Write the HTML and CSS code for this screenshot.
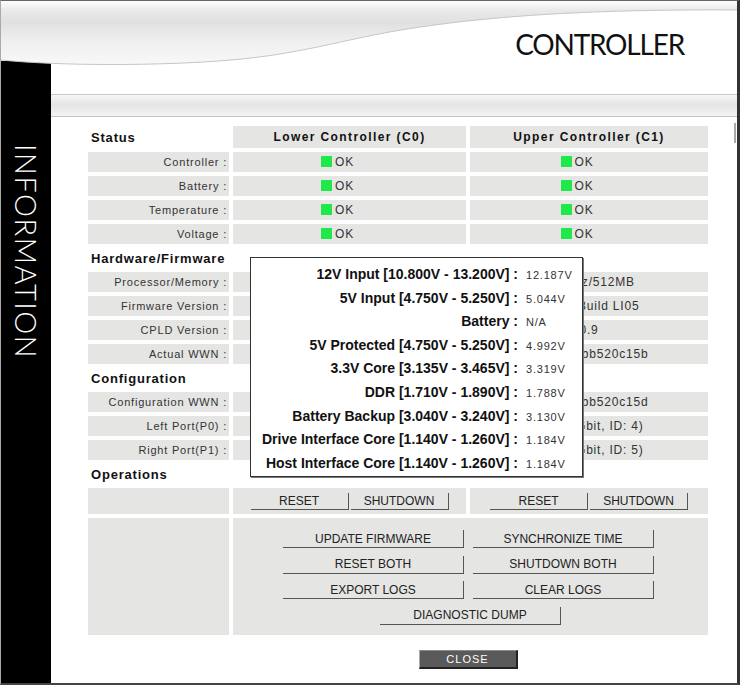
FILE: index.html
```html
<!DOCTYPE html>
<html lang="en">
<head>
    <meta charset="UTF-8">
    <meta name="viewport" content="width=device-width, initial-scale=1.0">
    <title>Controller Information</title>
    <link rel="stylesheet" href="styles.css">
</head>
<body>
<div class="frame">
    <!-- top banner with the grey swoosh -->
    <div class="head">
        <svg class="swoosh" width="736" height="68" viewBox="0 0 736 68">
            <defs>
                <linearGradient id="sheen" x1="0" y1="0" x2="0" y2="66" gradientUnits="userSpaceOnUse">
                    <stop offset="0" stop-color="#fdfdfd"/>
                    <stop offset="0.14" stop-color="#eaeaea"/>
                    <stop offset="0.32" stop-color="#e0e0e0"/>
                    <stop offset="0.6" stop-color="#efefef"/>
                    <stop offset="1" stop-color="#f9f9f9"/>
                </linearGradient>
            </defs>
            <path d="M0,59 C60,65 160,65 230,59 C300,53 340,39 400,29 C480,16 580,8 736,9 V0 H0 Z" fill="url(#sheen)"/>
            <path d="M0,59 C60,65 160,65 230,59 C300,53 340,39 400,29 C480,16 580,8 736,9" fill="none" stroke="#c6c6c6"/>
        </svg>
        <h1 class="title">CONTROLLER</h1>
    </div>

    <div class="body">
        <div class="side"><span>INFORMATION</span></div>

        <div class="main">
            <div class="band"></div>
            <div class="scroll"></div>

            <table class="info">
                <colgroup>
                    <col class="c-label">
                    <col class="c-lower">
                    <col class="c-upper">
                </colgroup>
                <tr>
                    <th class="sect">Status</th>
                    <th class="colhead">Lower Controller (C0)</th>
                    <th class="colhead">Upper Controller (C1)</th>
                </tr>
                <tr>
                    <td class="label">Controller :</td>
                    <td class="value state"><span class="led"></span>OK</td>
                    <td class="value state"><span class="led"></span>OK</td>
                </tr>
                <tr>
                    <td class="label">Battery :</td>
                    <td class="value state"><span class="led"></span>OK</td>
                    <td class="value state"><span class="led"></span>OK</td>
                </tr>
                <tr>
                    <td class="label">Temperature :</td>
                    <td class="value state"><span class="led"></span>OK</td>
                    <td class="value state"><span class="led"></span>OK</td>
                </tr>
                <tr>
                    <td class="label">Voltage :</td>
                    <td class="value state"><span class="led"></span>OK</td>
                    <td class="value state"><span class="led"></span>OK</td>
                </tr>

                <tr><th class="sect" colspan="3">Hardware/Firmware</th></tr>
                <tr>
                    <td class="label">Processor/Memory :</td>
                    <td class="value"></td>
                    <td class="value">1.2GHz/512MB</td>
                </tr>
                <tr>
                    <td class="label">Firmware Version :</td>
                    <td class="value"></td>
                    <td class="value">V1.00 Build LI05</td>
                </tr>
                <tr>
                    <td class="label">CPLD Version :</td>
                    <td class="value"></td>
                    <td class="value">0.9</td>
                </tr>
                <tr>
                    <td class="label">Actual WWN :</td>
                    <td class="value"></td>
                    <td class="value">500d0b2bb520c15b</td>
                </tr>

                <tr><th class="sect" colspan="3">Configuration</th></tr>
                <tr>
                    <td class="label">Configuration WWN :</td>
                    <td class="value"></td>
                    <td class="value">500d0b2bb520c15d</td>
                </tr>
                <tr>
                    <td class="label">Left Port(P0) :</td>
                    <td class="value"></td>
                    <td class="value">Link (2Gbit, ID: 4)</td>
                </tr>
                <tr>
                    <td class="label">Right Port(P1) :</td>
                    <td class="value"></td>
                    <td class="value">Link (2Gbit, ID: 5)</td>
                </tr>

                <tr><th class="sect" colspan="3">Operations</th></tr>
                <tr class="ops">
                    <td class="label"></td>
                    <td class="value">
                        <div class="pair">
                            <button class="btn">RESET</button>
                            <button class="btn">SHUTDOWN</button>
                        </div>
                    </td>
                    <td class="value">
                        <div class="pair">
                            <button class="btn">RESET</button>
                            <button class="btn">SHUTDOWN</button>
                        </div>
                    </td>
                </tr>
                <tr>
                    <td class="label"></td>
                    <td class="value actions" colspan="2">
                        <div class="grid">
                            <button class="btn">UPDATE FIRMWARE</button>
                            <button class="btn">SYNCHRONIZE TIME</button>
                            <button class="btn">RESET BOTH</button>
                            <button class="btn">SHUTDOWN BOTH</button>
                            <button class="btn">EXPORT LOGS</button>
                            <button class="btn">CLEAR LOGS</button>
                            <button class="btn wide">DIAGNOSTIC DUMP</button>
                        </div>
                    </td>
                </tr>
                <tr>
                    <td></td>
                    <td class="closer" colspan="2"><button class="close">CLOSE</button></td>
                </tr>
            </table>

            <!-- voltage popup shown over the hardware rows -->
            <div class="tip">
                <p><b>12V Input [10.800V - 13.200V] :</b><span>12.187V</span></p>
                <p><b>5V Input [4.750V - 5.250V] :</b><span>5.044V</span></p>
                <p><b>Battery :</b><span>N/A</span></p>
                <p><b>5V Protected [4.750V - 5.250V] :</b><span>4.992V</span></p>
                <p><b>3.3V Core [3.135V - 3.465V] :</b><span>3.319V</span></p>
                <p><b>DDR [1.710V - 1.890V] :</b><span>1.788V</span></p>
                <p><b>Battery Backup [3.040V - 3.240V] :</b><span>3.130V</span></p>
                <p><b>Drive Interface Core [1.140V - 1.260V] :</b><span>1.184V</span></p>
                <p><b>Host Interface Core [1.140V - 1.260V] :</b><span>1.184V</span></p>
            </div>
        </div>
    </div>
</div>
</body>
</html>
```

FILE: styles.css
```css
*{
    margin:0;
    padding:0;
}

body{
    background:#fff;
    font-family:"Liberation Sans",Arial,sans-serif;
    color:#333;
}

.frame{
    width:740px;
    height:685px;
    box-sizing:border-box;
    border-top:1px solid #666;
    border-left:1px solid #aaa;
    border-right:3px solid #333;
    border-bottom:2px solid #444;
    display:flex;
    flex-direction:column;
    overflow:hidden;
}

/* banner */
.head{
    position:relative;
    z-index:1;
    height:60px;
    flex:none;
    display:flex;
    justify-content:flex-end;
}
.swoosh{
    position:absolute;
    left:0;
    top:0;
}
.title{
    position:relative;
    font-family:Lato,sans-serif;
    font-weight:400;
    font-size:28px;
    line-height:28px;
    height:28px;
    letter-spacing:-1.2px;
    color:#111;
    margin:29px 53px 0 0;
}

.body{
    flex:1;
    display:flex;
}

/* black strip on the left */
.side{
    width:50px;
    flex:none;
    background:#000;
    display:flex;
    justify-content:center;
    align-items:flex-start;
    padding-top:83px;
    box-sizing:border-box;
}
.side span{
    writing-mode:vertical-rl;
    font-family:Lato,sans-serif;
    font-weight:300;
    font-size:29px;
    line-height:29px;
    letter-spacing:1.5px;
    color:#fff;
}

.main{
    flex:1;
    position:relative;
    padding-top:33px;
}
.band{
    height:21px;
    border-top:1px solid #c8c8c8;
    border-bottom:1px solid #c2c2c2;
    background:linear-gradient(#f7f7f7,#e4e4e4 45%,#f3f3f3);
}
.scroll{
    position:absolute;
    right:1px;
    top:62px;
    width:2px;
    height:20px;
    background:#a8a8a8;
}

/* info table */
.info{
    margin:5px 0 0 33px;
    border-spacing:4px;
    table-layout:fixed;
    width:628px;
}
.c-label{ width:141px; }
.c-lower{ width:233px; }
.c-upper{ width:238px; }

.info td, .info th{
    padding:0;
    height:20px;
}
.info .sect{
    text-align:left;
    font-size:13px;
    font-weight:bold;
    letter-spacing:.8px;
    color:#111;
    padding-left:3px;
}
.info .colhead{
    height:22px;
    background:#e5e5e3;
    font-size:12px;
    font-weight:bold;
    letter-spacing:1.4px;
    color:#111;
}
.info .label{
    background:#e5e5e3;
    text-align:right;
    font-size:11px;
    letter-spacing:.8px;
    padding-right:2px;
}
.info .value{
    background:#e5e5e3;
    text-align:center;
    font-size:12px;
    letter-spacing:.8px;
}
.info .state{
    padding-right:24px;
}
.led{
    display:inline-block;
    width:11px;
    height:11px;
    background:#1ee84a;
    margin-right:3px;
    vertical-align:-1px;
}

/* buttons */
.btn{
    font-family:"Liberation Sans",Arial,sans-serif;
    font-size:12px;
    color:#222;
    background:none;
    border:0;
    border-right:1px solid #555;
    border-bottom:1px solid #555;
    height:17px;
    line-height:16px;
    padding:0;
    cursor:pointer;
}
.info .ops td{
    height:26px;
}
.pair{
    display:flex;
    justify-content:center;
    gap:2px;
}
.pair .btn{
    width:98px;
}
.info .actions{
    padding:12px 4px 10px 0;
}
.grid{
    display:grid;
    grid-template-columns:181px 181px;
    justify-content:center;
    gap:7.5px 9px;
}
.grid .btn{
    height:18px;
}
.grid .wide{
    grid-column:1 / 3;
    justify-self:center;
    width:181px;
    margin-left:4px;
}
.info .closer{
    text-align:center;
    padding:10px 5px 0 0;
}
.close{
    width:99px;
    height:19px;
    background:#5a5a5a;
    color:#fff;
    font-family:"Liberation Sans",Arial,sans-serif;
    font-size:11px;
    letter-spacing:1px;
    border:0;
    border-left:1px solid #aaa;
    border-top:1px solid #8a8a8a;
    border-right:2px solid #222;
    border-bottom:2px solid #222;
    cursor:pointer;
}

/* voltage popup */
.tip{
    position:absolute;
    left:199px;
    top:196px;
    width:333px;
    height:220px;
    box-sizing:border-box;
    padding-top:5px;
    background:#fff;
    border:1px solid #333;
    box-shadow:1px 1px 0 #777;
}
.tip p{
    display:flex;
    align-items:baseline;
    height:23.6px;
    line-height:23.6px;
}
.tip b{
    flex:none;
    width:267px;
    text-align:right;
    font-size:14px;
    color:#111;
}
.tip span{
    margin-left:8px;
    font-size:11px;
    letter-spacing:.8px;
    color:#333;
}
```
